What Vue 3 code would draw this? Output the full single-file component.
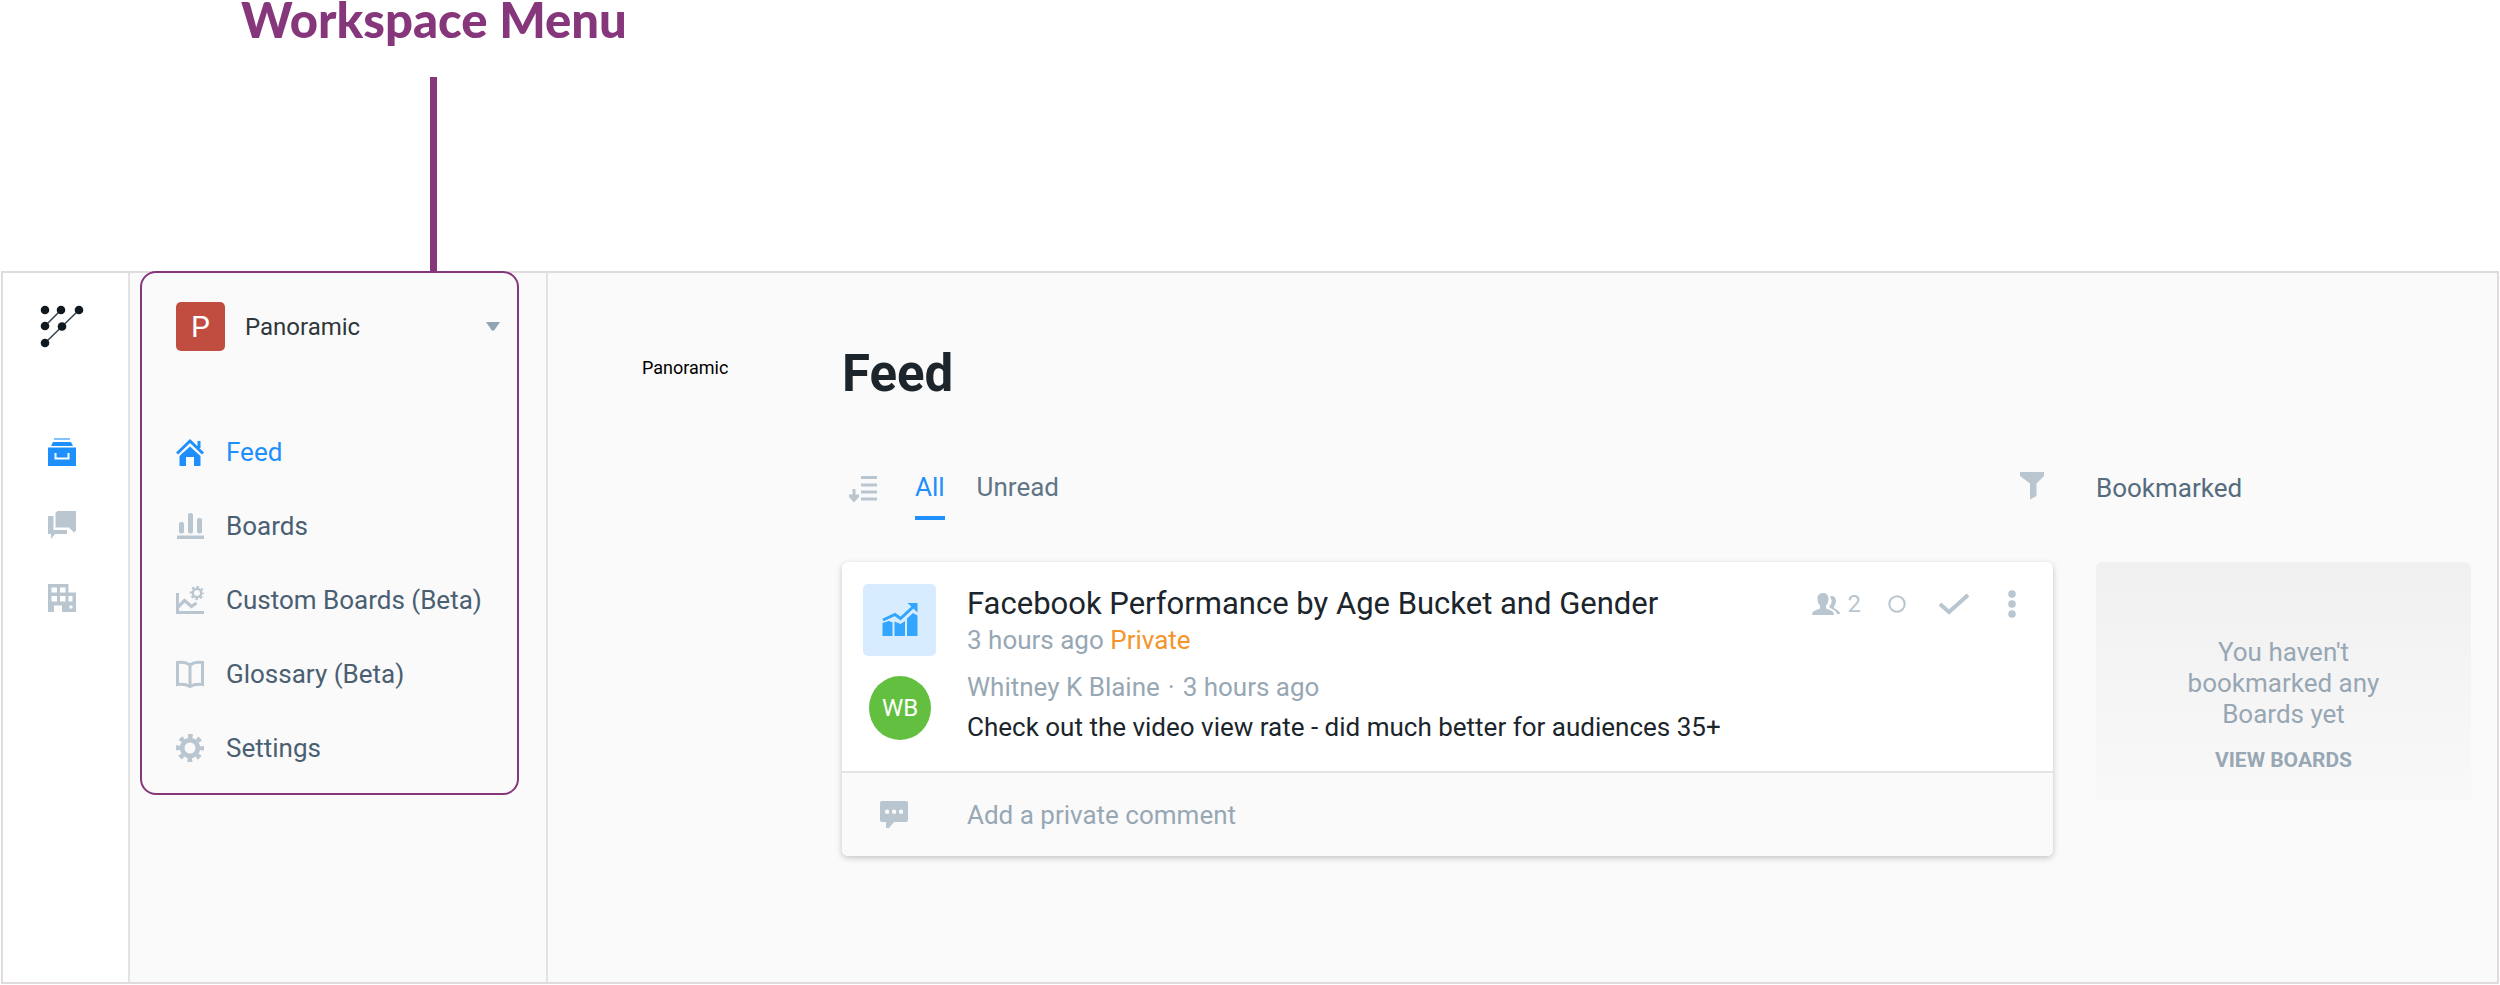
<script setup>
import { ref } from 'vue'

const navItems = [
  { id: 'feed', label: 'Feed' },
  { id: 'boards', label: 'Boards' },
  { id: 'custom', label: 'Custom Boards (Beta)' },
  { id: 'glossary', label: 'Glossary (Beta)' },
  { id: 'settings', label: 'Settings' },
]
const current = ref('feed')
const tabs = ['All', 'Unread']
const activeTab = ref('All')
const comment = ref('')
</script>

<template>
  <div class="page">
    <header class="callout">
      <div class="callout-inner">
        <p class="callout-title">Workspace Menu</p>
        <div class="callout-line"></div>
      </div>
    </header>

    <div class="frame">
      <nav class="rail" aria-label="Main">
        <a href="#" class="logo" aria-label="Home">
          <svg width="44" height="44" viewBox="0 0 44 44">
            <path d="M5 21 21 5M5 38 22 21.500 39 5" fill="none" stroke="#3b464d" stroke-width="1.600" />
            <g fill="#10191f">
              <circle cx="5" cy="5" r="4.300" /><circle cx="21" cy="5" r="4.300" /><circle cx="39" cy="5" r="4.300" />
              <circle cx="5" cy="21" r="4.300" /><circle cx="22" cy="21.500" r="4.300" /><circle cx="5" cy="38" r="4.300" />
            </g>
          </svg>
        </a>
        <a href="#" class="rail-link on" aria-label="Feed">
          <svg width="28" height="30" viewBox="0 0 28 30">
            <path d="M6 0h16v2H6z" opacity=".55" />
            <path d="M5 4h18l2 4H3z" />
            <path fill-rule="evenodd" d="M0 9.500h28V28H0zM6.500 15v6.500h15V15h-2v4.500h-11V15z" />
          </svg>
        </a>
        <a href="#" class="rail-link" aria-label="Conversations">
          <svg width="28" height="30" viewBox="0 0 28 30">
            <path d="M9.500 0H28v19.500l-2 2-5-5H7.500V2z" />
            <path d="M0 5h5.500v14H19v4H7l-4 5v-5H0z" />
          </svg>
        </a>
        <a href="#" class="rail-link" aria-label="Companies">
          <svg width="28" height="30" viewBox="0 0 28 30">
            <path fill-rule="evenodd" d="M0 0h20.500v8.500H28V28H14v-6.500H6V28H0zM3.500 3.500v5h5.500v-5zM12 3.500v5h5.500v-5zM3.500 12v5.500h5.500V12zM12 12v5.500h5.500V12zM20.500 12v5.500h4V12zM21.500 21.500v3h3v-3z" />
          </svg>
        </a>
      </nav>

      <aside class="sidebar">
        <div class="workspace">
          <button type="button" class="switcher">
            <span class="tile">P</span>
            <span class="switcher-name">Panoramic</span>
            <svg class="caret" width="14" height="9" viewBox="0 0 14 9"><path d="M0 0h14L8.500 8q-1.500 1.500-3 0z" /></svg>
          </button>
          <nav class="menu" aria-label="Workspace">
            <a
              v-for="item in navItems"
              :key="item.id"
              href="#"
              class="menu-link"
              :class="{ on: current === item.id }"
              @click.prevent="current = item.id"
            >
              <svg width="28" height="28" viewBox="0 0 28 28">
                <g v-if="item.id === 'feed'">
                  <path d="M1 15.500 14 3 27 15.500M23 10V3" fill="none" stroke="currentColor" stroke-width="3" />
                  <path d="M14 8.500 24.500 18v10H18v-9h-8v9H3.500V18z" />
                </g>
                <g v-else-if="item.id === 'boards'">
                  <rect x="3" y="10" width="5" height="11.500" rx="2" />
                  <rect x="12" y="1" width="5" height="20.500" rx="2" />
                  <rect x="21" y="6" width="5" height="15.500" rx="2" />
                  <rect x="1" y="23.500" width="27" height="3.500" />
                </g>
                <g v-else-if="item.id === 'custom'" fill="none" stroke="currentColor">
                  <path d="M1.500 7v19.500H28" stroke-width="3" />
                  <path d="m2 21 6.500-6.500 7 6L20.500 17" stroke-width="3.200" />
                  <circle cx="21" cy="7" r="4.200" stroke-width="2.400" />
                  <circle cx="21" cy="7" r="6.200" stroke-width="2" stroke-dasharray="2.400 2.470" stroke-dashoffset="1.200" />
                </g>
                <path
                  v-else-if="item.id === 'glossary'"
                  d="M14 5Q9 1.500 1.500 2.500v22Q9 23.500 14 26.500q5-3 12.500-2v-22Q19 1.500 14 5zM14 5v21"
                  fill="none" stroke="currentColor" stroke-width="3"
                />
                <g v-else fill="none" stroke="currentColor">
                  <circle cx="14" cy="14" r="7.900" stroke-width="4.800" />
                  <circle cx="14" cy="14" r="12" stroke-width="4" stroke-dasharray="4.700 4.725" stroke-dashoffset="2.350" />
                </g>
              </svg>
              <span>{{ item.label }}</span>
            </a>
          </nav>
        </div>
      </aside>

      <main class="main">
        <p class="crumb">Panoramic</p>
        <div class="content">
          <h1>Feed</h1>
          <div class="columns">
            <section class="feed">
              <div class="toolbar">
                <button type="button" class="icon-button sort" aria-label="Sort">
                  <svg width="28" height="28" viewBox="0 0 28 28">
                    <path d="M12 1h16v3H12zM12 8.500h16v3H12zM12 15.500h16v3H12zM12 22.500h16v3H12zM3.500 14h3v5.500H10V22l-5 5.500L0 22v-2.500h3.500z" />
                  </svg>
                </button>
                <button
                  v-for="tab in tabs"
                  :key="tab"
                  type="button"
                  class="tab"
                  :class="{ on: activeTab === tab }"
                  @click="activeTab = tab"
                >{{ tab }}</button>
                <button type="button" class="icon-button filter" aria-label="Filter">
                  <svg width="26" height="28" viewBox="0 0 26 28"><path d="M1 0h24v4l-7.500 7.500V24L11 27.500v-16L1 4z" /></svg>
                </button>
              </div>

              <article class="card">
                <div class="card-body">
                  <div class="chart-tile">
                    <svg width="36" height="36" viewBox="0 0 36 36">
                      <path d="M.500 21 7 19l3.500 1.500V34H.500zM12.500 19.500l6 2.500 4.500-3v15H12.500zM25 16.500l6-5.500 4.500 2.500V34H25z" />
                      <path d="M1 18 13 12.500l5.500 4L31 5" fill="none" stroke="currentColor" stroke-width="3" />
                      <path d="M25.500 1H35.500v9.500z" />
                    </svg>
                  </div>
                  <div class="headline">
                    <h2>Facebook Performance by Age Bucket and Gender</h2>
                    <p class="muted">3 hours ago <span class="private">Private</span></p>
                  </div>
                  <div class="actions">
                    <button type="button" class="icon-button people" aria-label="2 viewers">
                      <svg width="28" height="24" viewBox="0 0 28 24">
                        <path d="M11 1c4 0 5.500 2.500 5.500 6 0 3-1 5-2.500 6.500v3l6 2.500q2 1 2 4H0q0-3 2-4l6-2.500v-3C6.500 12 5.500 10 5.500 7 5.500 3.500 7 1 11 1z" />
                        <path d="M18 4c4-.5 6 1.500 6 5 0 2.500-1 4-2 5.500v1.500l4 2.500q2 1 2 3.500h-3l-1.500-3-6-3.500v-1.500q2-2 2.300-5z" />
                      </svg>
                      <span>2</span>
                    </button>
                    <button type="button" class="icon-button ring" aria-label="Mark as read">
                      <svg width="18" height="18" viewBox="0 0 18 18"><circle cx="9" cy="9" r="7.700" fill="none" stroke="currentColor" stroke-width="2" /></svg>
                    </button>
                    <button type="button" class="icon-button check" aria-label="Done">
                      <svg width="32" height="22" viewBox="0 0 32 22"><path d="m2 11 9 8L30 2" fill="none" stroke="currentColor" stroke-width="4" /></svg>
                    </button>
                    <button type="button" class="icon-button more" aria-label="More">
                      <svg width="8" height="28" viewBox="0 0 8 28"><circle cx="4" cy="4" r="3.800" /><circle cx="4" cy="14" r="3.800" /><circle cx="4" cy="24" r="3.800" /></svg>
                    </button>
                  </div>
                  <div class="avatar">WB</div>
                  <div class="remark">
                    <p class="muted byline"><span>Whitney K Blaine</span><span>·</span><span>3 hours ago</span></p>
                    <p class="remark-text">Check out the video view rate - did much better for audiences 35+</p>
                  </div>
                </div>
                <label class="reply">
                  <svg width="28" height="28" viewBox="0 0 28 28">
                    <path fill-rule="evenodd" d="M2 0h24q2 0 2 2v17q0 2-2 2H14l-5 6H6v-6H2q-2 0-2-2V2Q0 0 2 0zM7 8.500a2.200 2.200 0 1 0 .1 4.400A2.200 2.200 0 0 0 7 8.500zm7 0a2.200 2.200 0 1 0 .1 4.400 2.200 2.200 0 0 0-.1-4.400zm7 0a2.200 2.200 0 1 0 .1 4.400 2.200 2.200 0 0 0-.1-4.400z" />
                  </svg>
                  <input v-model="comment" type="text" placeholder="Add a private comment" aria-label="Add a private comment" />
                </label>
              </article>
            </section>

            <section class="bookmarks">
              <h3>Bookmarked</h3>
              <div class="empty">
                <p>You haven't bookmarked any Boards yet</p>
                <a href="#">VIEW BOARDS</a>
              </div>
            </section>
          </div>
        </div>
      </main>
    </div>
  </div>
</template>

<style>
body {
  background: #fff;
}
</style>

<style scoped>
.page {
  font-family: Roboto, "Liberation Sans", sans-serif;
  font-size: 26px;
  line-height: 32px;
  color: #1b252b;
}
.page * {
  box-sizing: border-box;
}
p, h1, h2, h3 {
  margin: 0;
  font-weight: 400;
}
a {
  color: inherit;
  text-decoration: none;
}
button {
  padding: 0;
  border: 0;
  background: none;
  font: inherit;
  color: inherit;
  text-align: left;
  cursor: pointer;
}
svg {
  display: block;
  flex: none;
  fill: currentColor;
}

.callout {
  display: flex;
  padding-left: 241px;
}
.callout-inner {
  display: flex;
  flex-direction: column;
  align-items: center;
  gap: 39px;
}
.callout-title {
  font-family: Lato, "Liberation Sans", sans-serif;
  font-size: 49px;
  font-weight: 900;
  line-height: 38px;
  color: #86367a;
  white-space: nowrap;
}
.callout-line {
  width: 7px;
  height: 194px;
  background: #86367a;
}

.frame {
  display: flex;
  min-height: 713px;
  margin: 0 1px;
  border: 2px solid #e0dcde;
  background: #fafafa;
}

.rail {
  display: flex;
  flex: none;
  flex-direction: column;
  align-items: center;
  width: 127px;
  padding: 32px 7px 0 0;
  border-right: 2px solid #e3e3e3;
  background: #fff;
  color: #b9c6d0;
}
.logo {
  margin-bottom: 89px;
}
.rail-link {
  height: 73px;
}
.rail-link.on {
  color: #1f8ffb;
}
.rail-link:hover {
  opacity: .8;
}

.sidebar {
  flex: none;
  width: 418px;
  padding: 0 27px 0 10px;
  border-right: 2px solid #e3e3e3;
}
.workspace {
  margin-top: -2px;
  padding: 29px 17px 8px 34px;
  border: 2px solid #86367a;
  border-radius: 16px;
}
.switcher {
  display: flex;
  align-items: center;
  width: 100%;
  margin-bottom: 64px;
  font-size: 24px;
  color: #30373b;
}
.tile {
  display: grid;
  place-items: center;
  width: 49px;
  height: 49px;
  margin-right: 20px;
  border-radius: 5px;
  background: #c04d40;
  color: #fff;
  font-size: 30px;
}
.caret {
  margin-left: auto;
  color: #90a4b4;
}
.menu-link {
  display: flex;
  align-items: center;
  gap: 22px;
  height: 74px;
  color: #b9c6d0;
}
.menu-link span {
  color: #4a6072;
}
.menu-link.on,
.menu-link.on span {
  color: #1f8ffb;
}

.main {
  display: flex;
  flex: 1;
  min-width: 0;
  padding: 71px 26px 0 94px;
}
.crumb {
  flex: none;
  width: 200px;
  padding-top: 14px;
  font-size: 18px;
  line-height: 20px;
  color: #000;
}
.content {
  flex: 1;
  min-width: 0;
}
h1 {
  margin-bottom: 68px;
  font-size: 51px;
  font-weight: 700;
  line-height: 60px;
}
.columns {
  display: grid;
  grid-template-columns: minmax(0, 1fr) 375px;
  gap: 43px;
}

.toolbar {
  display: flex;
  align-items: flex-start;
  height: 48px;
  margin-bottom: 42px;
  padding: 0 8px 0 7px;
}
.icon-button {
  display: flex;
  align-items: center;
  color: #b9c6d0;
}
.sort {
  margin: 3px 38px 0 0;
}
.filter {
  margin-left: auto;
}
.tab {
  margin-right: 32px;
  padding-bottom: 14px;
  border-bottom: 4px solid transparent;
  line-height: 30px;
  color: #617585;
}
.tab.on {
  border-color: #1f8ffb;
  color: #1f8ffb;
}

.card {
  overflow: hidden;
  border-radius: 6px;
  background: #fff;
  box-shadow: 0 2px 6px rgba(0, 0, 0, .22);
}
.card-body {
  display: grid;
  grid-template-columns: 104px minmax(0, 1fr) auto;
  row-gap: 15px;
  padding: 22px 37px 28px 21px;
  border-bottom: 2px solid #e3e5e6;
}
.chart-tile {
  display: grid;
  place-items: center;
  width: 73px;
  height: 72px;
  border-radius: 5px;
  background: #d7edff;
  color: #32a5ff;
}
h2 {
  font-size: 31px;
  line-height: 40px;
}
.muted {
  color: #97a7b4;
}
.private {
  color: #f5942a;
}
.actions {
  display: flex;
  align-items: center;
  height: 40px;
}
.people {
  gap: 8px;
  font-size: 24px;
}
.ring {
  margin-left: 27px;
}
.check {
  margin-left: 32px;
}
.more {
  margin-left: 38px;
}
.avatar {
  display: grid;
  place-items: center;
  width: 62px;
  height: 64px;
  margin: 5px 0 0 6px;
  border-radius: 50%;
  background: #62bf40;
  color: #fff;
  font-size: 24px;
}
.remark {
  display: grid;
  grid-column: 2 / -1;
  gap: 8px;
}
.byline {
  display: flex;
  gap: 8px;
}
.reply {
  display: flex;
  align-items: center;
  gap: 59px;
  height: 83px;
  padding: 0 38px;
  background: #fafafa;
  color: #b9c6d0;
}
.reply input {
  flex: 1;
  min-width: 0;
  padding: 0;
  border: 0;
  outline: 0;
  background: none;
  font: inherit;
  color: #10191f;
}
.reply input::placeholder {
  color: #97a7b4;
  opacity: 1;
}

h3 {
  height: 48px;
  margin-bottom: 42px;
  font-size: 26px;
  line-height: 32px;
  color: #566c7e;
}
.empty {
  display: flex;
  flex-direction: column;
  align-items: center;
  gap: 18px;
  padding: 75px 80px 59px;
  border-radius: 6px;
  background: linear-gradient(#f0f0f0, #fafafa);
  color: #97a7b4;
  text-align: center;
}
.empty p {
  line-height: 31px;
}
.empty a {
  font-size: 21px;
  font-weight: 700;
  line-height: 24px;
}
</style>
